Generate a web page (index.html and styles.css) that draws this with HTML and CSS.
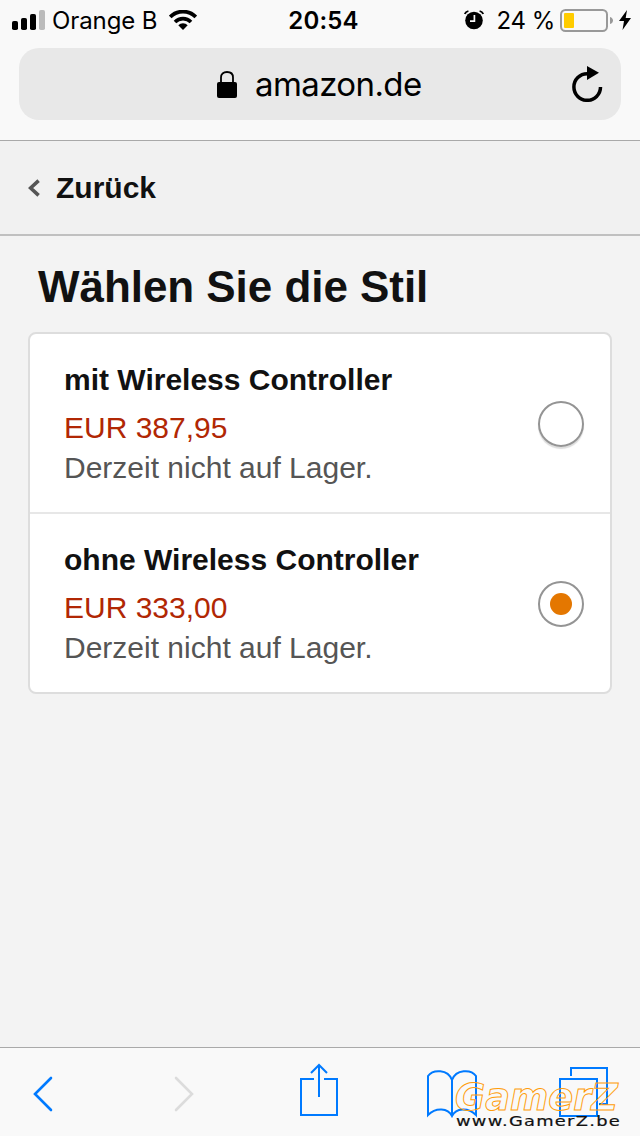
FILE: index.html
```
<!DOCTYPE html>
<html lang="de">
<head>
  <meta charset="UTF-8">
  <meta name="viewport" content="width=device-width, initial-scale=1.0">
  <title>amazon.de</title>
  <link rel="stylesheet" href="styles.css">
</head>
<body>
  <div class="phone">
    <header class="browser-top">
      <div class="status-bar">
        <div class="status-left">
          <svg class="signal" width="34" height="20" viewBox="0 0 34 20">
            <rect x="0" y="11" width="6" height="9" rx="1.8"/>
            <rect x="9" y="8" width="6" height="12" rx="1.8"/>
            <rect x="18" y="4" width="6" height="16" rx="1.8"/>
            <rect x="27" y="0" width="6" height="20" rx="1.8" fill="#bbb"/>
          </svg>
          <span class="carrier">Orange B</span>
          <svg class="wifi" width="28" height="20" viewBox="0 0 28 20">
            <path d="M1.2 6.9a18.1 18.1 0 0 1 25.6 0" fill="none" stroke="#000" stroke-width="3.8"/>
            <path d="M6 11.9a11.3 11.3 0 0 1 16 0" fill="none" stroke="#000" stroke-width="3.6"/>
            <path d="M9.3 15.3a6.6 6.6 0 0 1 9.4 0L14 20z"/>
          </svg>
        </div>
        <span class="time">20:54</span>
        <div class="status-right">
          <svg class="alarm" width="20" height="20" viewBox="0 0 20 20">
            <circle cx="10" cy="10.5" r="8.8"/>
            <path d="M.8 4Q1.6 1.8 4.4 1M19.2 4Q18.4 1.8 15.6 1" fill="none" stroke="#000" stroke-width="1.8"/>
            <path d="M10.4 5v6.2H6" fill="none" stroke="#f9f9f9" stroke-width="1.7"/>
          </svg>
          <span class="percent">24 %</span>
          <svg class="battery" width="54" height="23" viewBox="0 0 54 23">
            <rect x="1" y="1" width="46" height="21" rx="4.5" fill="none" stroke="#999" stroke-width="2"/>
            <rect x="4" y="4" width="10" height="15" rx="1" fill="#fc0"/>
            <path d="M50 8c4 1 4 6 0 7z" fill="#999"/>
          </svg>
          <svg class="bolt" width="12" height="20" viewBox="0 0 12 20">
            <path d="M8 0 0 11h5L3.5 20 12 8H6.7z"/>
          </svg>
        </div>
      </div>
      <div class="address-bar">
        <svg class="lock" width="20" height="27" viewBox="0 0 20 27">
          <path d="M4 12V6.5C4 3 6.3 1 10 1s6 2 6 5.5V12" fill="none" stroke="#000" stroke-width="1.8"/>
          <rect x="0" y="11" width="20" height="16" rx="2"/>
        </svg>
        <span class="domain">amazon.de</span>
        <svg class="reload" width="31" height="36" viewBox="0 0 31 36">
          <path d="M28.5 21A13.3 13.3 0 1 1 15.2 7.7" fill="none" stroke="#000" stroke-width="3.5"/>
          <path d="M15 0v14l12-7.3z"/>
        </svg>
      </div>
    </header>

    <nav class="back-bar">
      <svg class="back-icon" width="12" height="18" viewBox="0 0 12 18">
        <path d="M10.6 1.6 2.6 9l8 7.4" fill="none" stroke="#555" stroke-width="3.6"/>
      </svg>
      <span class="back-label">Zurück</span>
    </nav>

    <main class="content">
      <h1>Wählen Sie die Stil</h1>
      <div class="options">
        <label class="option">
          <span class="option-text">
            <span class="name">mit Wireless Controller</span>
            <span class="price">EUR 387,95</span>
            <span class="stock">Derzeit nicht auf Lager.</span>
          </span>
          <span class="radio"></span>
        </label>
        <label class="option">
          <span class="option-text">
            <span class="name">ohne Wireless Controller</span>
            <span class="price">EUR 333,00</span>
            <span class="stock">Derzeit nicht auf Lager.</span>
          </span>
          <span class="radio selected"></span>
        </label>
      </div>
    </main>

    <footer class="toolbar">
      <svg class="tool-back" width="20" height="36" viewBox="0 0 20 36">
        <path d="M18 2 2 18l16 16"/>
      </svg>
      <svg class="tool-forward" width="20" height="36" viewBox="0 0 20 36">
        <path d="M2 2l16 16L2 34"/>
      </svg>
      <svg class="tool-share" width="38" height="54" viewBox="0 0 38 54">
        <path d="M14 16H1v36h36V16H24M19 34V2M11 10l8-8 8 8"/>
      </svg>
      <svg class="tool-book" width="50" height="48" viewBox="0 0 50 48">
        <path d="M25 10C21-1 6-1 1 6v39c8-8 20-7 24 1 4-8 16-9 24-1V6C44-1 29-1 25 10v36"/>
      </svg>
      <svg class="tool-tabs" width="50" height="50" viewBox="0 0 50 50">
        <path d="M1 12h37v37H1zM12 9V1h36v36h-8"/>
      </svg>
      <svg class="watermark" width="190" height="62" viewBox="0 0 190 62">
        <text class="mark-name" x="14" y="35" textLength="163" lengthAdjust="spacingAndGlyphs">GamerZ</text>
        <text class="mark-url" x="15" y="50.5" textLength="165" lengthAdjust="spacingAndGlyphs">www.GamerZ.be</text>
      </svg>
    </footer>
  </div>
</body>
</html>
```
FILE: styles.css
```
* { box-sizing: border-box; }
body {
  margin: 0;
  background-color: #f3f3f3;
  color: #111;
  font-family: "Liberation Sans", Arial, sans-serif;
}
svg { display: block; flex: none; }
.phone {
  display: flex;
  flex-direction: column;
  width: 640px;
  height: 1136px;
  overflow: hidden;
}

/* Browser chrome */
.browser-top {
  height: 141px;
  background-color: #f9f9f9;
  border-bottom: 1px solid #a9a9a9;
  color: #000;
  font-family: Inter, sans-serif;
}
.status-bar {
  display: grid;
  grid-template-columns: 1fr auto 1fr;
  align-items: center;
  height: 40px;
  padding: 0 9px 0 12px;
  font-size: 24px;
  white-space: nowrap;
}
.status-left, .status-right { display: flex; align-items: center; }
.status-right { justify-content: flex-end; }
.carrier { margin-left: 6px; width: 117px; letter-spacing: -0.1px; }
.time { margin-left: 4px; font-weight: 600; letter-spacing: 0.2px; }
.percent { margin: 0 5px 0 13px; letter-spacing: -0.4px; }
.bolt { margin-left: 5px; }
.address-bar {
  display: flex;
  align-items: center;
  height: 72px;
  margin: 8px 19px 0;
  padding: 0 18px 0 198px;
  border-radius: 20px;
  background-color: #e8e8e8;
}
.domain { margin-left: 18px; font-size: 33px; letter-spacing: -0.6px; }
.reload { margin-left: auto; }

/* Page */
.back-bar {
  display: flex;
  align-items: center;
  height: 95px;
  padding-left: 28px;
  border-bottom: 2px solid #c0c0c0;
  background-color: #f1f1f1;
}
.back-label {
  margin-left: 16px;
  font-size: 30px;
  font-weight: bold;
}
.content { flex: 1; padding: 21px 28px; }
h1 {
  margin: 0 0 15px 10px;
  font-size: 44px;
  line-height: 60px;
  letter-spacing: -0.05px;
}
.options {
  border: 2px solid #ddd;
  border-radius: 8px;
  background-color: #fff;
}
.option {
  display: flex;
  justify-content: space-between;
  height: 178px;
  padding: 26px 26px 0 34px;
}
.option + .option {
  height: 180px;
  border-top: 2px solid #e7e7e7;
}
.option-text { display: flex; flex-direction: column; font-size: 30px; line-height: 40px; }
.name { margin-bottom: 8px; font-weight: bold; }
.price { color: #b12704; }
.stock { color: #555; }
.radio {
  display: flex;
  align-items: center;
  justify-content: center;
  width: 46px;
  height: 46px;
  margin-top: 41px;
  border: 2px solid #949494;
  border-radius: 50%;
  box-shadow: 0 2px 1px #ddd;
}
.radio.selected { box-shadow: none; }
.selected::after {
  content: "";
  width: 22px;
  height: 22px;
  border-radius: 50%;
  background-color: #e47700;
}

/* Bottom toolbar */
.toolbar {
  position: relative;
  display: flex;
  align-items: flex-start;
  height: 89px;
  padding: 15px 32px 0 33px;
  border-top: 1px solid #a9a9a9;
  background-color: #f9f9f9;
}
.toolbar path { fill: none; stroke: #007aff; stroke-width: 2; }
.toolbar .tool-back path, .toolbar .tool-forward path {
  stroke-width: 2.6;
  stroke-linecap: round;
}
.toolbar .tool-forward path { stroke: #dcdcdc; }
.tool-back { margin-top: 13px; }
.tool-forward { margin: 13px 0 0 121px; }
.tool-share { margin-left: 106px; }
.tool-book { margin: 7px 0 0 89px; }
.tool-tabs { margin: 4px 0 0 82px; }
.watermark {
  position: absolute;
  right: 9px;
  bottom: -1px;
  font-family: "DejaVu Sans", sans-serif;
}
.mark-name {
  fill: none;
  stroke: #ff9d0a;
  stroke-width: 1;
  font-size: 38px;
  font-style: italic;
  font-weight: bold;
}
.mark-url {
  fill: #111;
  stroke: #111;
  stroke-width: 0.2;
  font-size: 14px;
  letter-spacing: 1px;
}
```
